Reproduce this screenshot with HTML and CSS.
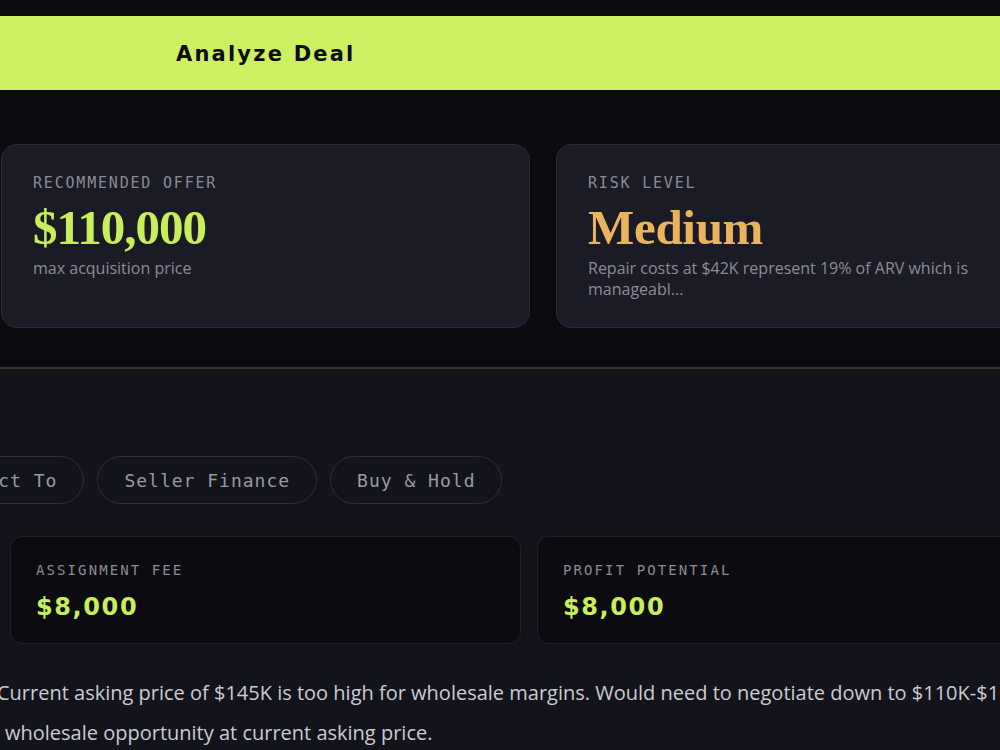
FILE: index.html
```html
<!DOCTYPE html>
<html lang="en">

<head>
    <meta charset="UTF-8">
    <meta name="viewport" content="width=device-width, initial-scale=1.0">
    <title>Deal Analyzer</title>
    <link rel="stylesheet" href="styles.css">
</head>

<body>
    <div class="topbar">
        <button class="analyze-btn" type="button">Analyze Deal</button>
    </div>

    <section class="summary">
        <div class="stat-card">
            <p class="label">Recommended Offer</p>
            <p class="big-value green">$110,000</p>
            <p class="note">max acquisition price</p>
        </div>
        <div class="stat-card">
            <p class="label">Risk Level</p>
            <p class="big-value orange">Medium</p>
            <p class="note">Repair costs at $42K represent 19% of ARV which is<br>manageabl...</p>
        </div>
    </section>

    <section class="strategy-panel">
        <div class="pills">
            <button class="pill">Subject To</button>
            <button class="pill">Seller Finance</button>
            <button class="pill">Buy &amp; Hold</button>
        </div>

        <div class="metrics">
            <div class="metric">
                <p class="label small">Assignment Fee</p>
                <p class="metric-value">$8,000</p>
            </div>
            <div class="metric">
                <p class="label small">Profit Potential</p>
                <p class="metric-value">$8,000</p>
            </div>
        </div>

        <p class="verdict">Current asking price of $145K is too high for wholesale margins. Would need to negotiate down to $110K-$115K range.<br>wholesale opportunity at current asking price.</p>
    </section>
</body>

</html>
```

FILE: styles.css
```css
* {
    margin: 0;
    padding: 0;
    box-sizing: border-box;
}

body {
    background-color: #0b0b10;
    font-family: 'Open Sans', sans-serif;
    overflow: hidden;
    width: 1000px;
    height: 750px;
}

.topbar {
    padding-top: 16px;
}

.analyze-btn {
    display: block;
    width: 100%;
    height: 74px;
    background-color: #ccf062;
    border: none;
    color: #0b0b10;
    text-align: left;
    padding: 2px 0 0 176px;
    font-family: 'DejaVu Sans', sans-serif;
    font-weight: bold;
    font-size: 21px;
    letter-spacing: 2.2px;
}

.summary {
    display: grid;
    grid-template-columns: 529px 470px;
    gap: 26px;
    padding: 54px 0 0 1px;
    margin-bottom: 39px;
}

.stat-card {
    height: 184px;
    background-color: #1b1b25;
    border: 1px solid #2b2b36;
    border-radius: 16px;
    padding: 28px 31px;
}

.stat-card:last-child {
    border-right: none;
    border-radius: 16px 0 0 16px;
}

.label {
    font-family: 'DejaVu Sans Mono', monospace;
    font-size: 15px;
    line-height: 20px;
    letter-spacing: 1.8px;
    text-transform: uppercase;
    color: #8b8b96;
}

.label.small {
    font-size: 14px;
    letter-spacing: 2.1px;
}

.big-value {
    font-family: 'Liberation Serif', serif;
    font-weight: bold;
    font-size: 49px;
    line-height: 58px;
    letter-spacing: -1px;
    margin-top: 6px;
}

.green {
    color: #c8ee5c;
}

.orange {
    color: #eab35e;
    letter-spacing: -0.3px;
}

.note {
    font-size: 16px;
    line-height: 21px;
    color: #8c8c98;
    margin-top: 1px;
}

.strategy-panel {
    background-color: #13131b;
    border-top: 2px solid #34342f;
    padding-top: 87px;
    height: 400px;
}

.pills {
    display: flex;
    gap: 13px;
    margin-left: -88px;
}

.pill {
    height: 48px;
    padding: 0 26px;
    border: 1px solid #2f2f39;
    border-radius: 24px;
    background: transparent;
    color: #9a9aa5;
    font-family: 'DejaVu Sans Mono', monospace;
    font-size: 18px;
    letter-spacing: 1px;
    white-space: nowrap;
}

.metrics {
    display: grid;
    grid-template-columns: 511px 480px;
    gap: 16px;
    margin: 32px 0 0 10px;
}

.metric {
    height: 108px;
    background-color: #0b0b10;
    border: 1px solid #21212b;
    border-radius: 12px;
    padding: 23px 25px;
}

.metric:last-child {
    border-right: none;
    border-radius: 12px 0 0 12px;
}

.metric-value {
    font-family: 'DejaVu Sans', sans-serif;
    font-weight: bold;
    font-size: 24px;
    letter-spacing: 1.6px;
    line-height: 32px;
    margin-top: 11px;
    color: #c8ee5c;
}

.verdict {
    margin: 29px 0 0 5px;
    text-indent: -8px;
    width: 1100px;
    font-size: 20px;
    line-height: 40px;
    color: #cbcbd4;
    white-space: nowrap;
}
```
